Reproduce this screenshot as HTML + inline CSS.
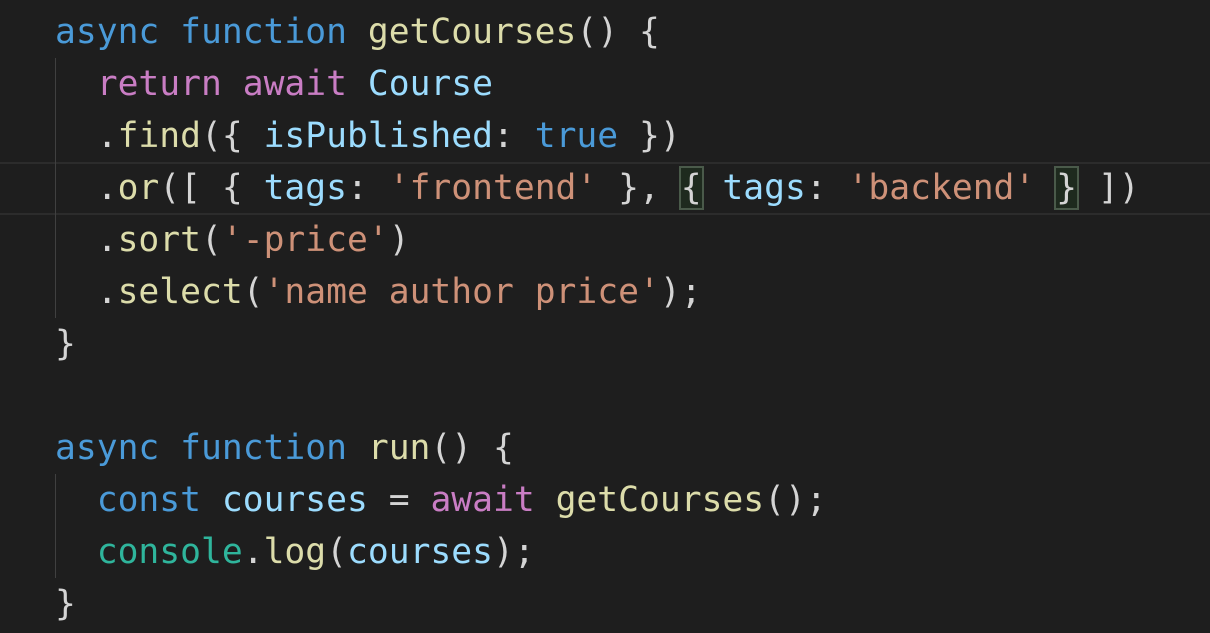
<!DOCTYPE html>
<html><head><style>
body{margin:0;width:1210px;height:633px;background:#1e1e1e;overflow:hidden;position:relative}
.code{position:absolute;left:55px;top:6px;font-family:"DejaVu Sans Mono","Liberation Mono",monospace;font-size:34.65px;line-height:52px;color:#d4d4d4;white-space:pre;letter-spacing:0}
.k{color:#4a9ad8}.p{color:#c97dc4}.f{color:#dcdcaa}.t{color:#4ec9b0}.v{color:#9cdcfe}.s{color:#ce9178}.c{color:#2fb59c}
.cur{position:absolute;left:0;top:162px;width:1210px;height:49px;border-top:2px solid #2c2c2c;border-bottom:2px solid #2c2c2c}
.g{position:absolute;left:55px;width:1px;background:#404040}
.b{outline:2px solid #4a5a4a;background:#1e2a1e}
</style></head><body>
<div class="cur"></div>
<div class="g" style="top:58px;height:260px"></div>
<div class="g" style="top:474px;height:104px"></div>
<div class="code"><span class="k">async</span> <span class="k">function</span> <span class="f">getCourses</span>() {
  <span class="p">return</span> <span class="p">await</span> <span class="v">Course</span>
  .<span class="f">find</span>({ <span class="v">isPublished</span>: <span class="k">true</span> })
  .<span class="f">or</span>([ { <span class="v">tags</span>: <span class="s">'frontend'</span> }, <span class="b">{</span> <span class="v">tags</span>: <span class="s">'backend'</span> <span class="b">}</span> ])
  .<span class="f">sort</span>(<span class="s">'-price'</span>)
  .<span class="f">select</span>(<span class="s">'name author price'</span>);
}

<span class="k">async</span> <span class="k">function</span> <span class="f">run</span>() {
  <span class="k">const</span> <span class="v">courses</span> = <span class="p">await</span> <span class="f">getCourses</span>();
  <span class="c">console</span>.<span class="f">log</span>(<span class="v">courses</span>);
}</div>
</body></html>
